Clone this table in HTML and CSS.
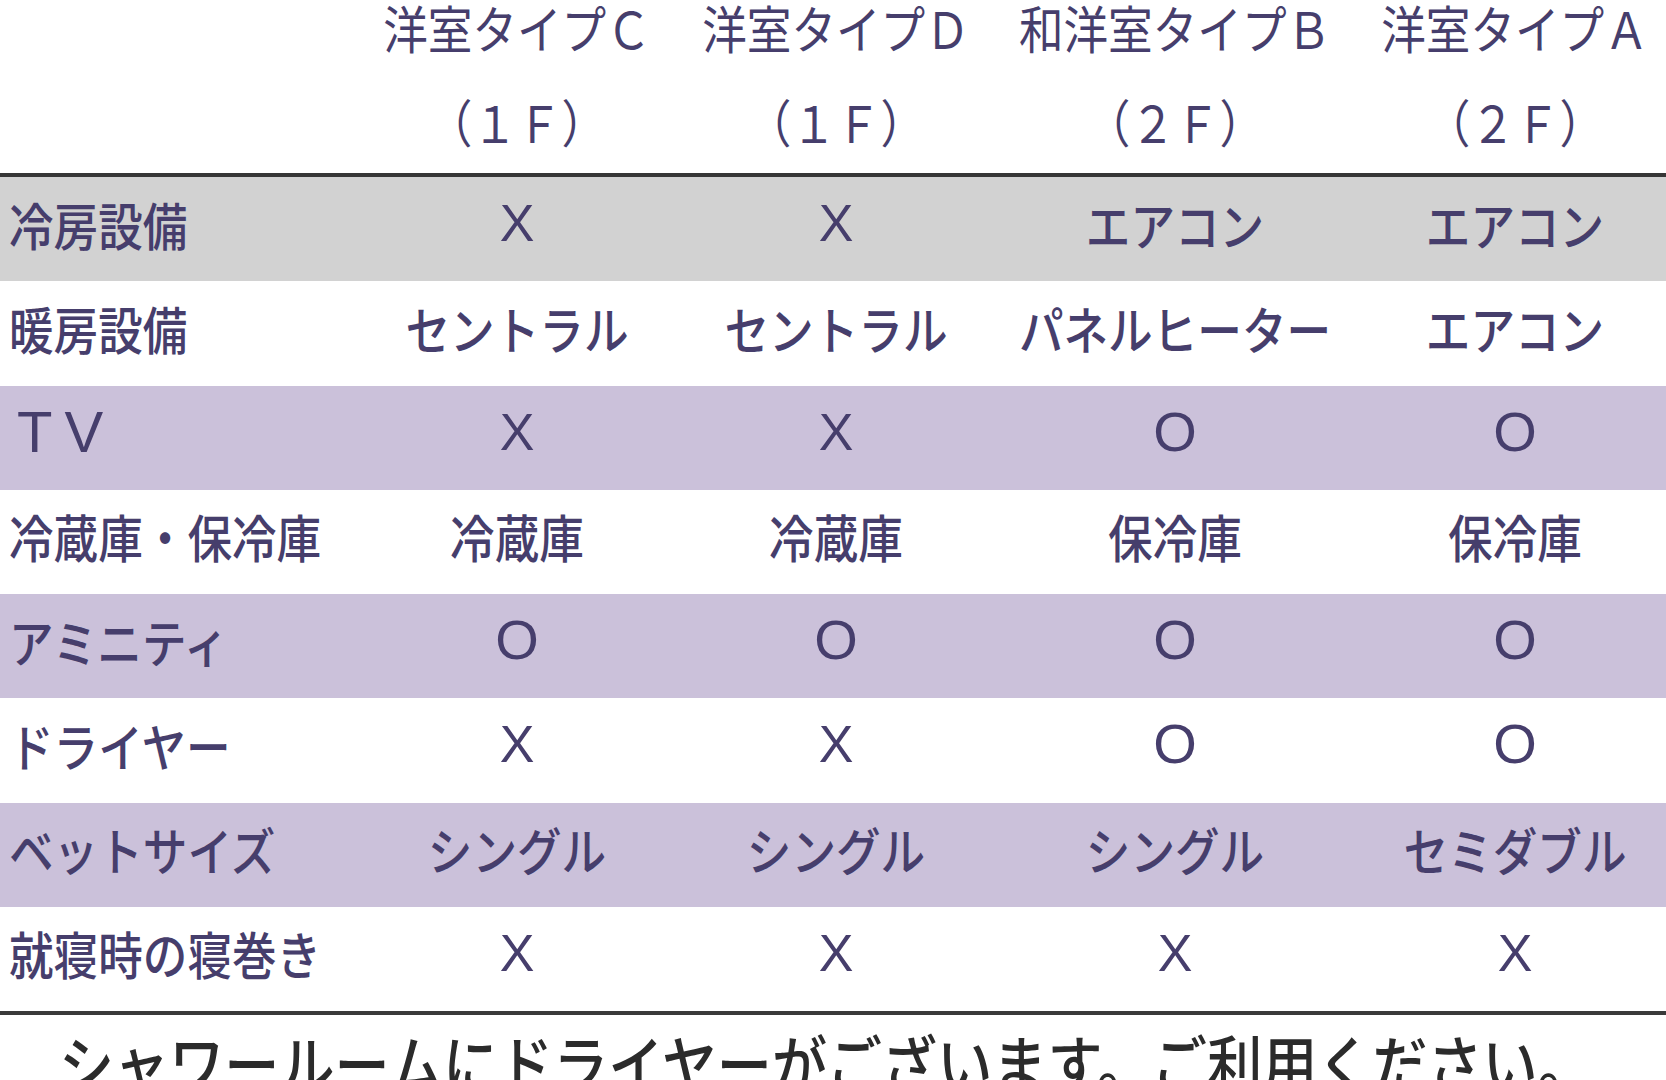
FILE: index.html
```html
<!DOCTYPE html>
<html lang="ja">
<head>
<meta charset="utf-8">
<title>客室設備一覧</title>
<link rel="stylesheet" href="styles.css">
</head>
<body>
<div class="sheet">
  <div class="grid head">
    <div class="cell label"></div>
    <div class="cell hc"><span class="t">洋室タイプＣ</span><span class="t">（１Ｆ）</span></div>
    <div class="cell hc"><span class="t">洋室タイプＤ</span><span class="t">（１Ｆ）</span></div>
    <div class="cell hc"><span class="t">和洋室タイプＢ</span><span class="t">（２Ｆ）</span></div>
    <div class="cell hc last"><span class="t">洋室タイプＡ</span><span class="t">（２Ｆ）</span></div>
  </div>
  <div class="rows">
    <div class="grid row gray">
      <div class="cell label"><span class="t">冷房設備</span></div>
      <div class="cell"><span class="x">X</span></div>
      <div class="cell"><span class="x">X</span></div>
      <div class="cell"><span class="t">エアコン</span></div>
      <div class="cell last"><span class="t">エアコン</span></div>
    </div>
    <div class="grid row">
      <div class="cell label"><span class="t">暖房設備</span></div>
      <div class="cell"><span class="t">セントラル</span></div>
      <div class="cell"><span class="t">セントラル</span></div>
      <div class="cell"><span class="t">パネルヒーター</span></div>
      <div class="cell last"><span class="t">エアコン</span></div>
    </div>
    <div class="grid row purple">
      <div class="cell label"><span class="tv">TV</span></div>
      <div class="cell"><span class="x">X</span></div>
      <div class="cell"><span class="x">X</span></div>
      <div class="cell"><span class="o">O</span></div>
      <div class="cell last"><span class="o">O</span></div>
    </div>
    <div class="grid row">
      <div class="cell label"><span class="t">冷蔵庫・保冷庫</span></div>
      <div class="cell"><span class="t">冷蔵庫</span></div>
      <div class="cell"><span class="t">冷蔵庫</span></div>
      <div class="cell"><span class="t">保冷庫</span></div>
      <div class="cell last"><span class="t">保冷庫</span></div>
    </div>
    <div class="grid row purple">
      <div class="cell label"><span class="t">アミニティ</span></div>
      <div class="cell"><span class="o">O</span></div>
      <div class="cell"><span class="o">O</span></div>
      <div class="cell"><span class="o">O</span></div>
      <div class="cell last"><span class="o">O</span></div>
    </div>
    <div class="grid row">
      <div class="cell label"><span class="t">ドライヤー</span></div>
      <div class="cell"><span class="x">X</span></div>
      <div class="cell"><span class="x">X</span></div>
      <div class="cell"><span class="o">O</span></div>
      <div class="cell last"><span class="o">O</span></div>
    </div>
    <div class="grid row purple">
      <div class="cell label"><span class="t">ベットサイズ</span></div>
      <div class="cell"><span class="t">シングル</span></div>
      <div class="cell"><span class="t">シングル</span></div>
      <div class="cell"><span class="t">シングル</span></div>
      <div class="cell last"><span class="t">セミダブル</span></div>
    </div>
    <div class="grid row">
      <div class="cell label"><span class="t">就寝時の寝巻き</span></div>
      <div class="cell"><span class="x">X</span></div>
      <div class="cell"><span class="x">X</span></div>
      <div class="cell"><span class="x">X</span></div>
      <div class="cell last"><span class="x">X</span></div>
    </div>
  </div>
  <p class="note"><span class="nt">シャワールームにドライヤーがございます。ご利用ください。</span></p>
</div>
</body>
</html>
```
FILE: styles.css
```css
html, body {
  margin: 0;
  padding: 0;
  background: #ffffff;
  overflow: hidden;
}

.sheet {
  width: 1666px;
  color: #463e6c;
  font-family: "Noto Sans CJK JP", "Noto Sans", sans-serif;
}

.grid {
  display: grid;
  grid-template-columns: 367px 300px 338px 340px 321px;
}

.cell {
  display: flex;
  justify-content: center;
  align-items: center;
  white-space: nowrap;
  min-width: 0;
}

.cell.last {
  padding-left: 19px;
}

.cell.label {
  justify-content: flex-start;
  padding-left: 9px;
}

.t {
  display: inline-block;
  font-size: 44.6px;
  line-height: 51px;
  font-weight: 500;
  transform: scaleY(1.143);
}

.head {
  height: 173px;
  border-bottom: 4px solid #363636;
  box-sizing: content-box;
}

.hc {
  flex-direction: column;
  justify-content: flex-start;
  gap: 43px;
  padding-top: 1px;
}

.hc .t {
  font-weight: 400;
}

.rows {
  border-bottom: 4px solid #3a3a3a;
}

.row {
  height: 104.25px;
  box-sizing: border-box;
  padding-bottom: 12px;
  background: #ffffff;
}

.row.gray {
  background: #d2d2d2;
}

.row.purple {
  background: #cbc1da;
}

.x {
  font-family: "Liberation Sans", Arial, sans-serif;
  font-size: 52px;
  line-height: 52px;
}

.o {
  font-family: "Liberation Sans", Arial, sans-serif;
  font-size: 56px;
  line-height: 56px;
}

.tv {
  font-family: "Liberation Sans", Arial, sans-serif;
  font-size: 58px;
  line-height: 58px;
  letter-spacing: 12px;
  margin-left: 8px;
}

.note {
  margin: 15px 0 0 0;
  padding-left: 59px;
  color: #2b2b2b;
  white-space: nowrap;
}

.nt {
  display: inline-block;
  font-size: 55.1px;
  line-height: 63px;
  font-weight: 500;
  transform: scaleY(1.143);
}
```
